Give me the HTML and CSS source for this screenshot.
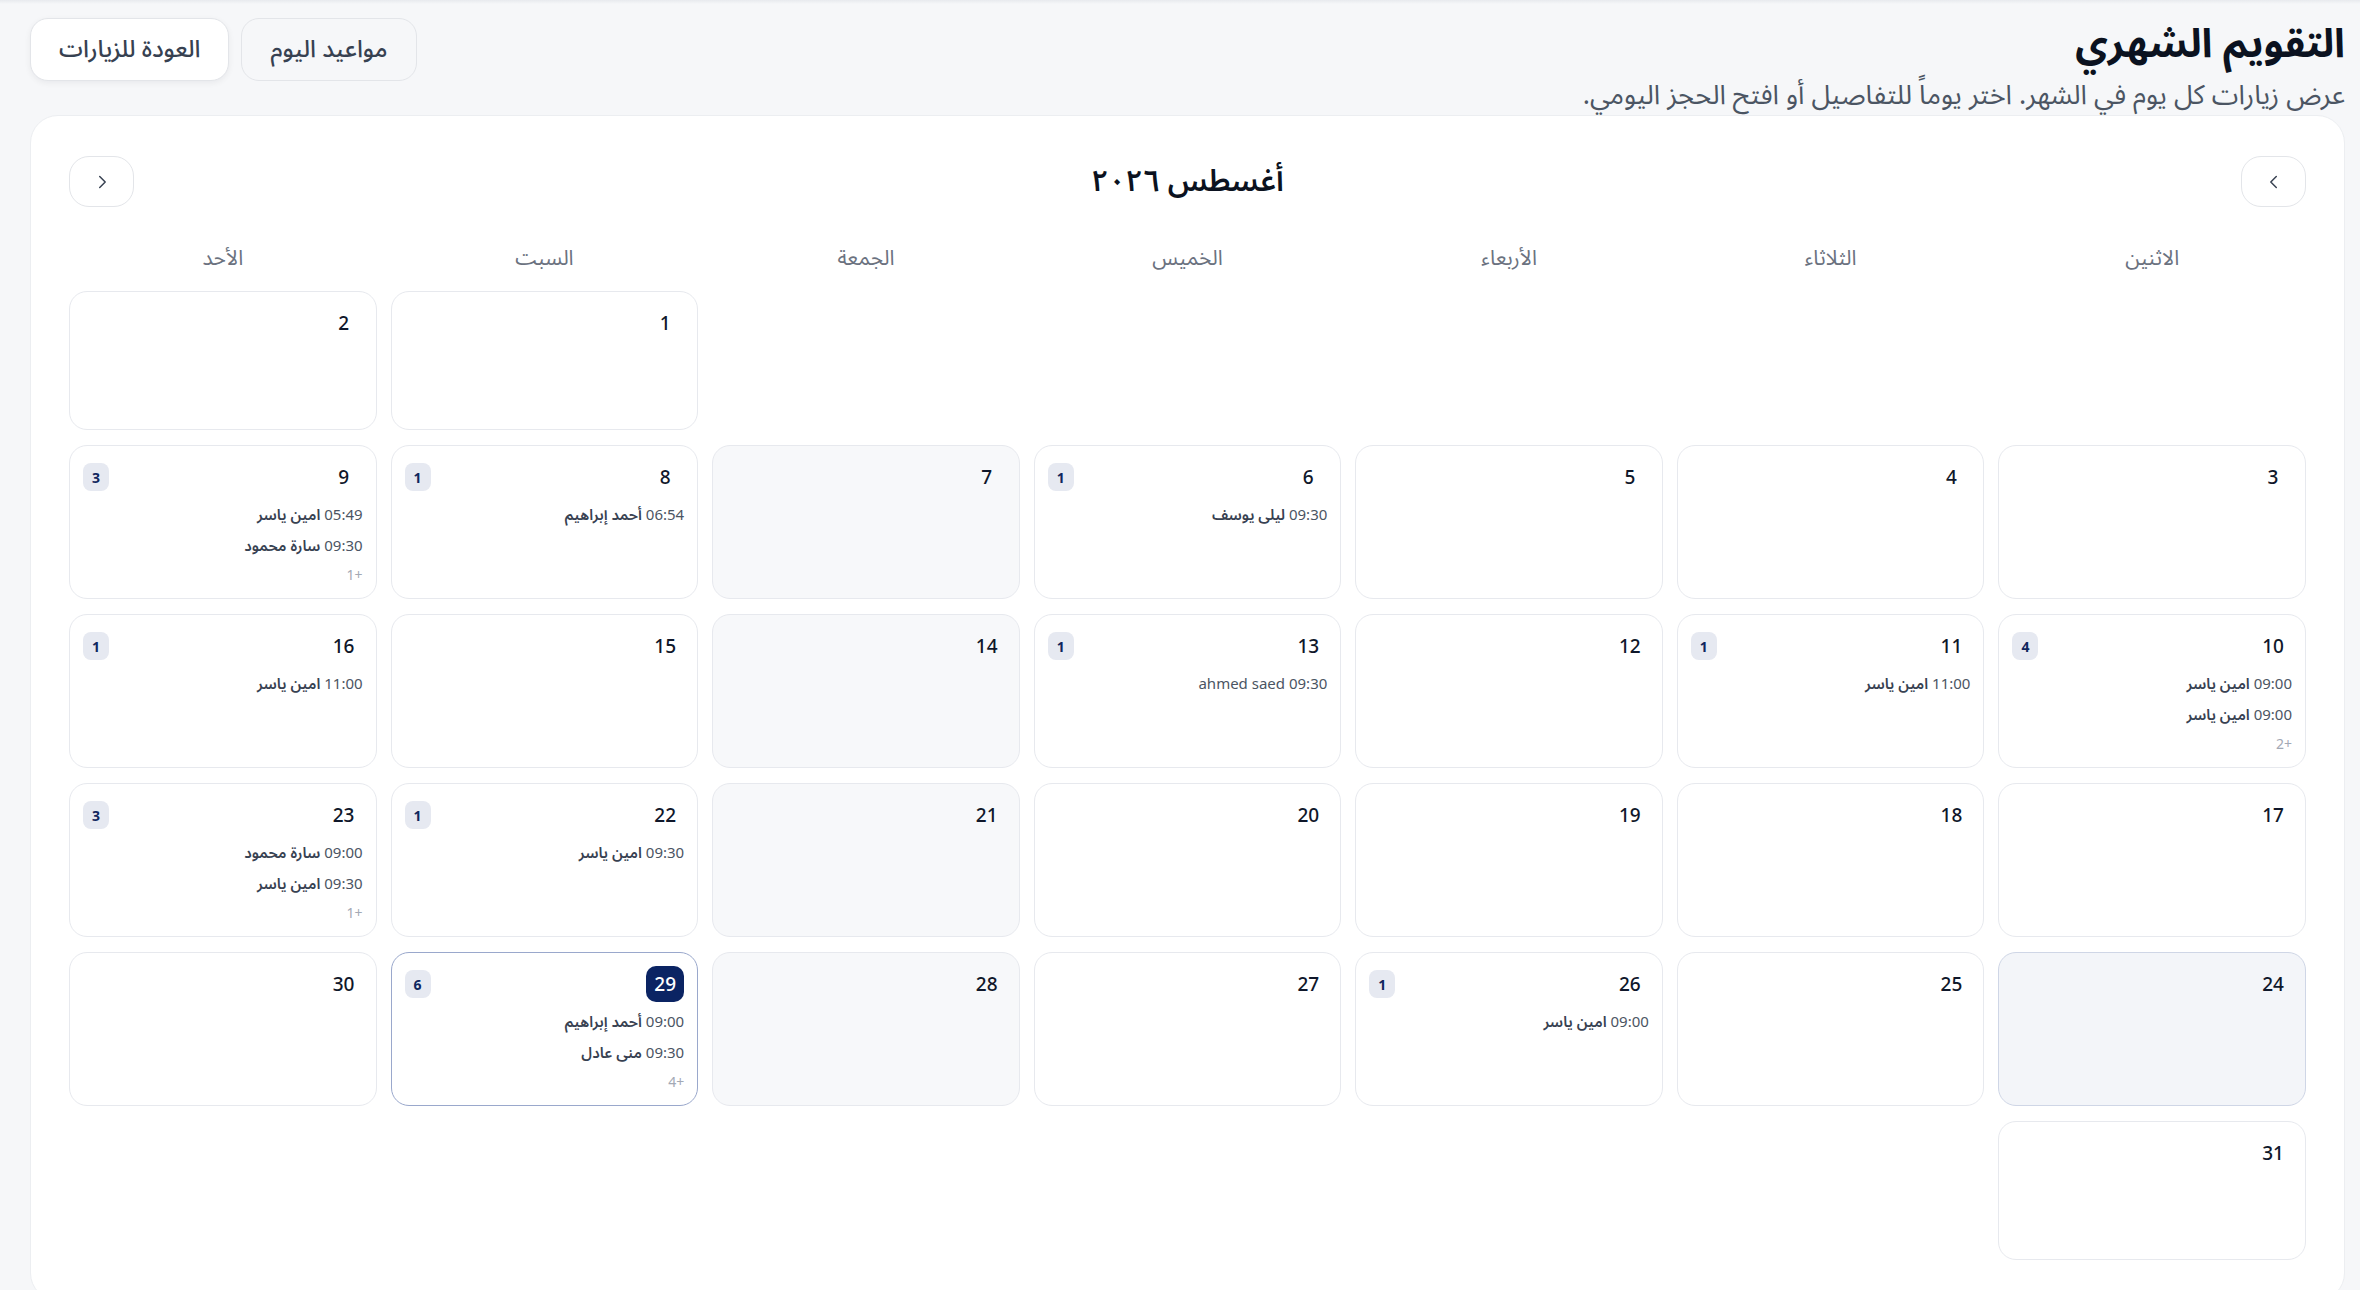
FILE: index.html
```html
<!DOCTYPE html>
<html lang="ar" dir="rtl">
<head>
<meta charset="utf-8">
<title>التقويم الشهري</title>
<link rel="stylesheet" href="styles.css">
</head>
<body>
<div class="page">
  <header class="header">
    <div class="title-block">
      <h1 class="title">التقويم الشهري</h1>
      <p class="subtitle">عرض زيارات كل يوم في الشهر. اختر يوماً للتفاصيل أو افتح الحجز اليومي.</p>
    </div>
    <div class="actions">
      <button class="btn btn-ghost">مواعيد اليوم</button>
      <button class="btn btn-white">العودة للزيارات</button>
    </div>
  </header>

  <section class="card">
    <div class="nav">
      <button class="nav-btn" aria-label="السابق">
        <svg viewBox="0 0 24 24" class="chev"><polyline points="14.5 6 8.5 12 14.5 18"/></svg>
      </button>
      <h2 class="month">أغسطس ٢٠٢٦</h2>
      <button class="nav-btn" aria-label="التالي">
        <svg viewBox="0 0 24 24" class="chev"><polyline points="9.5 6 15.5 12 9.5 18"/></svg>
      </button>
    </div>

    <div class="weekdays">
      <div>الاثنين</div>
      <div>الثلاثاء</div>
      <div>الأربعاء</div>
      <div>الخميس</div>
      <div>الجمعة</div>
      <div>السبت</div>
      <div>الأحد</div>
    </div>

    <div class="days">
      <div class="blank"></div>
      <div class="blank"></div>
      <div class="blank"></div>
      <div class="blank"></div>
      <div class="blank"></div>
      <div class="day"><div class="head"><span class="num">1</span></div></div>
      <div class="day"><div class="head"><span class="num">2</span></div></div>

      <div class="day"><div class="head"><span class="num">3</span></div></div>
      <div class="day"><div class="head"><span class="num">4</span></div></div>
      <div class="day"><div class="head"><span class="num">5</span></div></div>
      <div class="day">
        <div class="head"><span class="num">6</span><span class="count">1</span></div>
        <div class="events"><div class="ev"><span class="time">09:30</span> <span class="name">ليلى يوسف</span></div></div>
      </div>
      <div class="day friday"><div class="head"><span class="num">7</span></div></div>
      <div class="day">
        <div class="head"><span class="num">8</span><span class="count">1</span></div>
        <div class="events"><div class="ev"><span class="time">06:54</span> <span class="name">أحمد إبراهيم</span></div></div>
      </div>
      <div class="day">
        <div class="head"><span class="num">9</span><span class="count">3</span></div>
        <div class="events">
          <div class="ev"><span class="time">05:49</span> <span class="name">امين ياسر</span></div>
          <div class="ev"><span class="time">09:30</span> <span class="name">سارة محمود</span></div>
          <div class="more">+1</div>
        </div>
      </div>

      <div class="day">
        <div class="head"><span class="num">10</span><span class="count">4</span></div>
        <div class="events">
          <div class="ev"><span class="time">09:00</span> <span class="name">امين ياسر</span></div>
          <div class="ev"><span class="time">09:00</span> <span class="name">امين ياسر</span></div>
          <div class="more">+2</div>
        </div>
      </div>
      <div class="day">
        <div class="head"><span class="num">11</span><span class="count">1</span></div>
        <div class="events"><div class="ev"><span class="time">11:00</span> <span class="name">امين ياسر</span></div></div>
      </div>
      <div class="day"><div class="head"><span class="num">12</span></div></div>
      <div class="day">
        <div class="head"><span class="num">13</span><span class="count">1</span></div>
        <div class="events"><div class="ev"><span class="time">09:30</span> <span class="name latin">ahmed saed</span></div></div>
      </div>
      <div class="day friday"><div class="head"><span class="num">14</span></div></div>
      <div class="day"><div class="head"><span class="num">15</span></div></div>
      <div class="day">
        <div class="head"><span class="num">16</span><span class="count">1</span></div>
        <div class="events"><div class="ev"><span class="time">11:00</span> <span class="name">امين ياسر</span></div></div>
      </div>

      <div class="day"><div class="head"><span class="num">17</span></div></div>
      <div class="day"><div class="head"><span class="num">18</span></div></div>
      <div class="day"><div class="head"><span class="num">19</span></div></div>
      <div class="day"><div class="head"><span class="num">20</span></div></div>
      <div class="day friday"><div class="head"><span class="num">21</span></div></div>
      <div class="day">
        <div class="head"><span class="num">22</span><span class="count">1</span></div>
        <div class="events"><div class="ev"><span class="time">09:30</span> <span class="name">امين ياسر</span></div></div>
      </div>
      <div class="day">
        <div class="head"><span class="num">23</span><span class="count">3</span></div>
        <div class="events">
          <div class="ev"><span class="time">09:00</span> <span class="name">سارة محمود</span></div>
          <div class="ev"><span class="time">09:30</span> <span class="name">امين ياسر</span></div>
          <div class="more">+1</div>
        </div>
      </div>

      <div class="day selected"><div class="head"><span class="num">24</span></div></div>
      <div class="day"><div class="head"><span class="num">25</span></div></div>
      <div class="day">
        <div class="head"><span class="num">26</span><span class="count">1</span></div>
        <div class="events"><div class="ev"><span class="time">09:00</span> <span class="name">امين ياسر</span></div></div>
      </div>
      <div class="day"><div class="head"><span class="num">27</span></div></div>
      <div class="day friday"><div class="head"><span class="num">28</span></div></div>
      <div class="day today">
        <div class="head"><span class="num">29</span><span class="count">6</span></div>
        <div class="events">
          <div class="ev"><span class="time">09:00</span> <span class="name">أحمد إبراهيم</span></div>
          <div class="ev"><span class="time">09:30</span> <span class="name">منى عادل</span></div>
          <div class="more">+4</div>
        </div>
      </div>
      <div class="day"><div class="head"><span class="num">30</span></div></div>

      <div class="day"><div class="head"><span class="num">31</span></div></div>
    </div>
  </section>
</div>
</body>
</html>
```

FILE: styles.css
```css
* { box-sizing: border-box; }

html, body {
  margin: 0;
  height: 100%;
  overflow: hidden;
}

body {
  direction: rtl;
  background: linear-gradient(#e8eaee, #f6f7f9 4px) no-repeat, #f6f7f9;
  font-family: "Noto Sans", "Noto Sans Arabic", "DejaVu Sans", sans-serif;
  color: #111827;
}

.page {
  padding: 18px 15px 0 30px;
}

.header {
  display: flex;
  justify-content: space-between;
  align-items: flex-start;
}

.title {
  margin: 0;
  font-size: 40px;
  line-height: 48px;
  font-weight: 700;
  color: #0b1220;
}

.subtitle {
  margin: 10px 0 0;
  font-size: 27px;
  line-height: 36px;
  color: #4b5563;
}

.actions {
  display: flex;
  gap: 12px;
}

.btn {
  height: 63px;
  padding: 0 28px;
  border-radius: 18px;
  font-family: inherit;
  font-size: 24px;
  font-weight: 500;
  color: #374151;
  border: 1px solid #e3e5e9;
  cursor: pointer;
}

.btn-ghost {
  background: #f6f7f9;
}

.btn-white {
  background: #ffffff;
  box-shadow: 0 2px 6px rgba(17, 24, 39, 0.06);
}

.card {
  margin-top: 3px;
  background: #ffffff;
  border: 1px solid #eceef1;
  border-radius: 28px;
  padding: 34px 38px 40px;
}

.nav {
  display: flex;
  justify-content: space-between;
  align-items: center;
}

.nav-btn {
  width: 65px;
  height: 51px;
  border: 1px solid #e3e5e9;
  border-radius: 20px;
  background: #ffffff;
  display: flex;
  align-items: center;
  justify-content: center;
  padding: 0;
  cursor: pointer;
}

.chev {
  width: 22px;
  height: 22px;
  fill: none;
  stroke: #374151;
  stroke-width: 1.6;
  stroke-linecap: round;
  stroke-linejoin: round;
}

.month {
  margin: 0;
  font-size: 30px;
  font-weight: 600;
  color: #0b1220;
}

.weekdays {
  margin-top: 30px;
  display: grid;
  grid-template-columns: repeat(7, 1fr);
  column-gap: 14px;
  text-align: center;
  font-size: 21px;
  line-height: 28px;
  color: #6b7280;
}

.days {
  margin-top: 20px;
  display: grid;
  grid-template-columns: repeat(7, 1fr);
  gap: 15px 14px;
}

.day {
  min-height: 139px;
  border: 1px solid #e7e9ee;
  border-radius: 18px;
  background: #ffffff;
  padding: 13px 13px 13px;
  display: flex;
  flex-direction: column;
}

.day.friday {
  background: #f7f8fa;
}

.day.selected {
  background: #f3f5f9;
  border-color: #cfd6e6;
}

.day.today {
  border-color: #9aa8cc;
}

.head {
  display: flex;
  justify-content: space-between;
  align-items: center;
  height: 36px;
}

.num {
  min-width: 38px;
  height: 36px;
  display: flex;
  align-items: center;
  justify-content: center;
  font-size: 19px;
  font-weight: 500;
  color: #0f172a;
  border-radius: 10px;
}

.today .num {
  background: #0b2463;
  color: #ffffff;
}

.count {
  min-width: 26px;
  height: 28px;
  padding: 0 6px;
  border-radius: 8px;
  background: #e6e9f1;
  color: #10275e;
  font-size: 14px;
  font-weight: 700;
  display: flex;
  align-items: center;
  justify-content: center;
}

.events {
  margin-top: 8px;
  display: flex;
  flex-direction: column;
  gap: 9px;
}

.ev {
  font-size: 15px;
  line-height: 22px;
  white-space: nowrap;
}

.time {
  color: #4b5563;
}

.name {
  font-weight: 600;
  color: #374151;
}

.name.latin {
  font-weight: 400;
  color: #4b5563;
}

.more {
  font-size: 14px;
  line-height: 20px;
  color: #a3a9b5;
}
```
